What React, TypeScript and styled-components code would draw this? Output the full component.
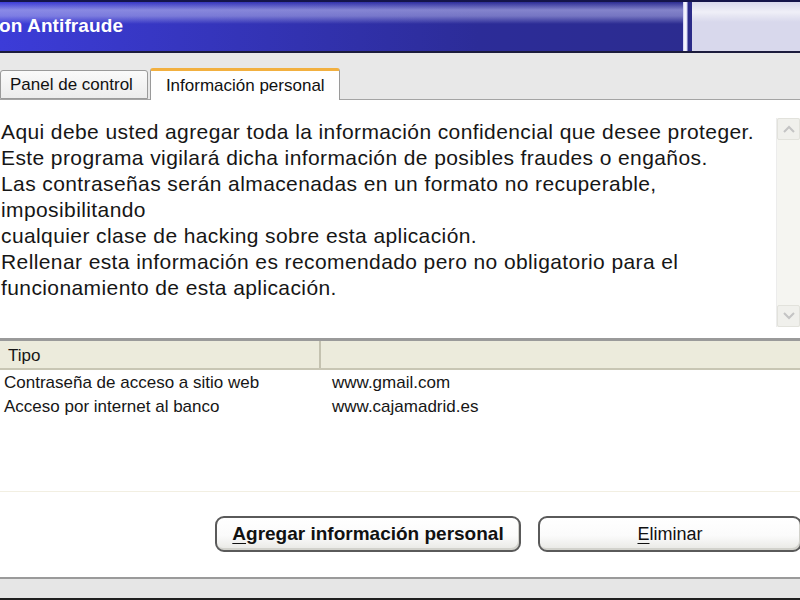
import React from "react";
import styled, { createGlobalStyle } from "styled-components";

const Global = createGlobalStyle`
  html, body {
    margin: 0;
    padding: 0;
    background: #e8e8e8;
  }
  * {
    box-sizing: border-box;
  }
`;

const entries = [
  { tipo: "Contraseña de acceso a sitio web", site: "www.gmail.com" },
  { tipo: "Acceso por internet al banco", site: "www.cajamadrid.es" },
];

const infoLines = [
  "Aqui debe usted agregar toda la información confidencial que desee proteger.",
  "Este programa vigilará dicha información de posibles fraudes o engaños.",
  "Las contraseñas serán almacenadas en un formato no recuperable,",
  "imposibilitando",
  "cualquier clase de hacking sobre esta aplicación.",
  "Rellenar esta información es recomendado pero no obligatorio para el",
  "funcionamiento de esta aplicación.",
];

export default function App() {
  return (
    <Window>
      <Global />
      <TitleBar>
        <TitleMain>
          <TitleText>on Antifraude</TitleText>
        </TitleMain>
        <TitleDivider />
        <TitleRight />
      </TitleBar>

      <TabStrip>
        <Tab>Panel de control</Tab>
        <Tab $active>Información personal</Tab>
      </TabStrip>

      <Panel>
        <InfoBox>
          <InfoText>
            {infoLines.map((line) => (
              <div key={line}>{line}</div>
            ))}
          </InfoText>
          <ScrollBar>
            <ScrollButton>
              <Chevron viewBox="0 0 12 8">
                <path d="M1 7 L6 2 L11 7" />
              </Chevron>
            </ScrollButton>
            <ScrollTrack />
            <ScrollButton>
              <Chevron viewBox="0 0 12 8">
                <path d="M1 1 L6 6 L11 1" />
              </Chevron>
            </ScrollButton>
          </ScrollBar>
        </InfoBox>

        <ListHeader>
          <HeaderCell $width={321}>Tipo</HeaderCell>
          <HeaderCell />
        </ListHeader>
        <ListBody>
          {entries.map((e) => (
            <Row key={e.site}>
              <TipoCell>{e.tipo}</TipoCell>
              <SiteCell>{e.site}</SiteCell>
            </Row>
          ))}
        </ListBody>

        <ButtonRow>
          <XpButton $bold $width={306}>
            <u>A</u>gregar información personal
          </XpButton>
          <XpButton $width={264}>
            <u>E</u>liminar
          </XpButton>
        </ButtonRow>
      </Panel>

      <StatusBar />
    </Window>
  );
}

const Window = styled.div`
  width: 800px;
  height: 600px;
  overflow: hidden;
  display: flex;
  flex-direction: column;
  background: #e8e8e8;
  font-family: "Liberation Sans", Arial, sans-serif;
  color: #111;

  & > * {
    flex-shrink: 0;
  }
`;

const TitleBar = styled.div`
  height: 53px;
  display: flex;
  flex-direction: row;
  border-top: 2px solid #14144a;
  border-bottom: 2px solid #1c1c3c;
`;

const TitleMain = styled.div`
  flex: 1;
  display: flex;
  align-items: center;
  background:
    linear-gradient(
      180deg,
      rgba(255, 255, 255, 0) 0px,
      rgba(190, 190, 240, 0.6) 8px,
      rgba(190, 190, 240, 0.5) 14px,
      rgba(255, 255, 255, 0) 22px
    ),
    linear-gradient(90deg, #3c3cd8 0%, #3434b8 35%, #2c2c98 70%, #2c2c90 100%);
`;

const TitleText = styled.span`
  color: #ffffff;
  font-size: 19px;
  font-weight: 700;
  letter-spacing: 0.1px;
  margin-left: -1px;
  margin-top: -2px;
`;

const TitleDivider = styled.div`
  width: 9px;
  background: linear-gradient(
    90deg,
    #c8c8f0 0px,
    #ffffff 2px,
    #d8d8f4 4px,
    #2a2a88 5px,
    #2a2a88 9px
  );
`;

const TitleRight = styled.div`
  width: 108px;
  background:
    linear-gradient(
      180deg,
      rgba(255, 255, 255, 0) 0px,
      rgba(255, 255, 255, 0.6) 10px,
      rgba(255, 255, 255, 0) 20px
    ),
    #d8d8ec;
`;

const TabStrip = styled.div`
  height: 47px;
  display: flex;
  flex-direction: row;
  align-items: flex-end;
  gap: 2px;
  border-bottom: 1px solid #a4a4a4;
  background: #e8e8e8;
`;

const Tab = styled.div<{ $active?: boolean }>`
  height: ${(p) => (p.$active ? "32px" : "29px")};
  margin-bottom: ${(p) => (p.$active ? "-1px" : "0")};
  padding: ${(p) => (p.$active ? "5px 14px 0 15px" : "4px 14px 0 9px")};
  font-size: 17px;
  color: #111;
  border: 1px solid #9a9a9a;
  border-bottom: ${(p) => (p.$active ? "none" : "1px solid #9a9a9a")};
  border-top: ${(p) => (p.$active ? "3px solid #f2b040" : "1px solid #9a9a9a")};
  border-radius: 3px 3px 0 0;
  background: ${(p) =>
    p.$active ? "#ffffff" : "linear-gradient(180deg, #fafafa 0%, #ececec 100%)"};
  white-space: nowrap;
`;

const Panel = styled.div`
  height: 477px;
  display: flex;
  flex-direction: column;
  background: #ffffff;

  & > * {
    flex-shrink: 0;
  }
`;

const InfoBox = styled.div`
  height: 241px;
  display: flex;
  flex-direction: row;
  border-bottom: 3px solid #9a9a9a;
`;

const InfoText = styled.div`
  flex: 1;
  padding: 19px 0 0 1px;
  font-size: 21px;
  letter-spacing: 0.4px;
  line-height: 26px;
  color: #161616;
  white-space: nowrap;
`;

const ScrollBar = styled.div`
  width: 24px;
  margin: 18px 0 11px 0;
  display: flex;
  flex-direction: column;
  background: #f5f5f1;
  border-left: 1px solid #ececec;
`;

const ScrollButton = styled.div`
  height: 22px;
  display: flex;
  align-items: center;
  justify-content: center;
  background: #f0f0ec;
  border: 1px solid #e2e2dc;
  border-radius: 2px;
`;

const ScrollTrack = styled.div`
  flex: 1;
`;

const Chevron = styled.svg`
  width: 12px;
  height: 8px;
  fill: none;
  stroke: #c4c4c4;
  stroke-width: 2;
`;

const ListHeader = styled.div`
  height: 29px;
  display: flex;
  flex-direction: row;
  background: #ecebdc;
  border-bottom: 2px solid #c8c6b4;
`;

const HeaderCell = styled.div<{ $width?: number }>`
  ${(p) => (p.$width ? `width: ${p.$width}px;` : "flex: 1;")}
  padding: 5px 0 0 8px;
  font-size: 17px;
  color: #161616;
  border-right: ${(p) => (p.$width ? "2px solid #c4c2b0" : "none")};
`;

const ListBody = styled.div`
  height: 122px;
  padding-top: 1px;
  border-bottom: 1px solid #f2efe2;
`;

const Row = styled.div`
  height: 24px;
  display: flex;
  flex-direction: row;
  align-items: center;
  font-size: 17px;
  color: #161616;
`;

const TipoCell = styled.div`
  width: 332px;
  padding-left: 4px;
`;

const SiteCell = styled.div`
  flex: 1;
`;

const ButtonRow = styled.div`
  height: 85px;
  display: flex;
  flex-direction: row;
  align-items: flex-start;
  gap: 17px;
  padding: 24px 0 0 215px;
`;

const XpButton = styled.div<{ $bold?: boolean; $width: number }>`
  flex: none;
  width: ${(p) => p.$width}px;
  height: 36px;
  display: flex;
  align-items: center;
  justify-content: center;
  font-size: ${(p) => (p.$bold ? "19px" : "18px")};
  font-weight: ${(p) => (p.$bold ? 700 : 400)};
  color: #111;
  border: 2px solid #5a5a5a;
  border-radius: 9px;
  background: linear-gradient(180deg, #ffffff 0%, #fbfbfb 55%, #e8e8e4 100%);
  box-shadow: inset -1px -2px 0 #d2d2cc;

  u {
    text-underline-offset: 3px;
  }
`;

const StatusBar = styled.div`
  height: 23px;
  background: #e6e6e6;
  border-top: 2px solid #9a9a9a;
  border-bottom: 2px solid #202020;
`;
